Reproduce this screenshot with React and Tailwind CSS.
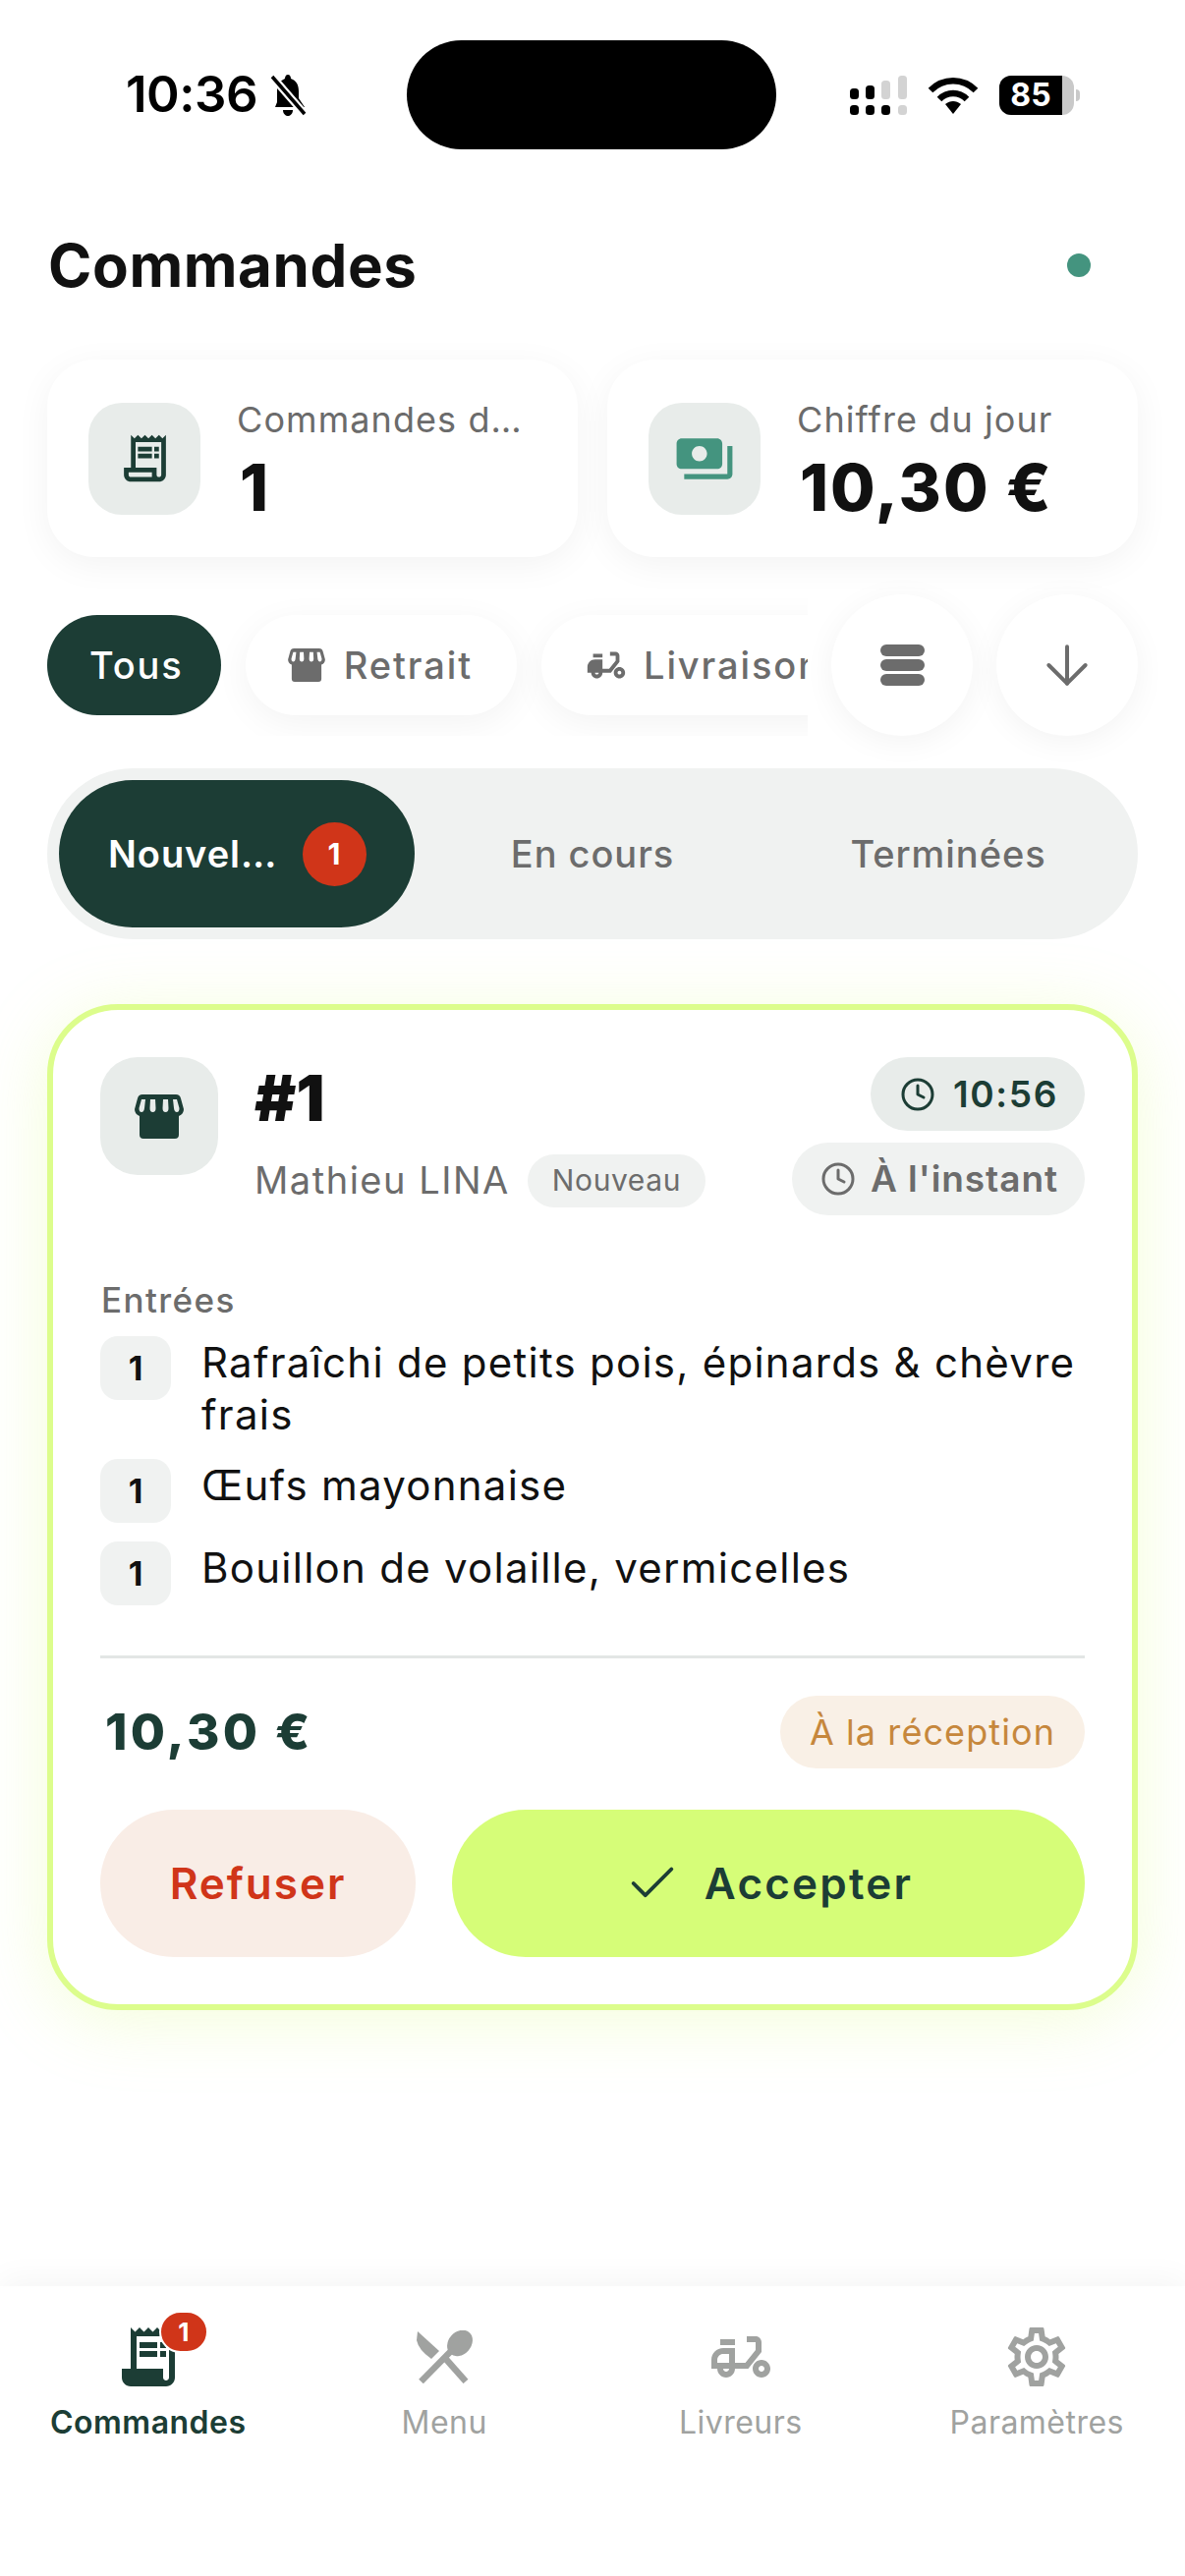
import React from "react";
import { ArrowDown, Check, Clock } from "lucide-react";
import { MdMoped, MdOutlineMoped, MdOutlineReceiptLong, MdOutlineSettings, MdPayments, MdReceiptLong } from "react-icons/md";

function StoreIcon({ className }) {
  return (
    <svg viewBox="0 0 50 45" className={className} fill="currentColor">
      <path
        fillRule="evenodd"
        d="M8 0H42Q46 0 47 4L50 15Q50 20 45 22V41Q45 45 41 45H9Q5 45 5 41V22Q0 20 0 15L3 4Q4 0 8 0ZM7 5 4.5 14Q4.5 18 7 18T10 14L11 5ZM16 5 15.5 14Q15.5 18 18.5 18T21.5 14L21 5ZM29 5 28.5 14Q28.5 18 31.5 18T34.5 14L34 5ZM39 5 40 14Q40.5 18 43 18T45.5 14L43 5Z"
      />
    </svg>
  );
}

function CutleryIcon({ className }) {
  return (
    <svg viewBox="0 0 58 54" className={className} fill="currentColor">
      <ellipse cx="45" cy="13" rx="11.5" ry="14.5" transform="rotate(42 45 13)" />
      <path d="M38 19 5.5 52" stroke="currentColor" strokeWidth="6.5" fill="none" />
      <path d="M2 1 24 21 16 29Q3 20 1 10Z" />
      <path d="M28 26 51 52" stroke="currentColor" strokeWidth="6.5" fill="none" />
    </svg>
  );
}

function SignalIcon() {
  return (
    <svg viewBox="0 0 58 40" className="w-[58px] h-[40px]">
      <rect x="0" y="13" width="9" height="11" rx="3.5" fill="#000" />
      <rect x="0" y="30" width="9" height="10" rx="3.5" fill="#000" />
      <rect x="16" y="10" width="9" height="14" rx="3.5" fill="#000" />
      <rect x="16" y="30" width="9" height="10" rx="3.5" fill="#000" />
      <rect x="32" y="5" width="9" height="19" rx="3.5" fill="#d3d3d3" />
      <rect x="32" y="30" width="9" height="10" rx="3.5" fill="#000" />
      <rect x="49" y="0" width="9" height="24" rx="3.5" fill="#d3d3d3" />
      <rect x="49" y="30" width="9" height="10" rx="3.5" fill="#d3d3d3" />
    </svg>
  );
}

function WifiIcon() {
  return (
    <svg viewBox="0 0 52 38" className="w-[52px] h-[38px]" fill="none" stroke="#000" strokeWidth="6.5">
      <path d="M3 14C16 1 36 1 49 14" />
      <path d="M12 23C20 15 32 15 40 23" />
      <path d="M18 28 26 38 34 28C29 24 23 24 18 28Z" fill="#000" stroke="none" />
    </svg>
  );
}

function BellOffIcon() {
  return (
    <svg viewBox="0 0 38 42" className="w-[38px] h-[42px]" fill="#000">
      <path d="M19 0C21 0 22 2 22 4 28 6 30 11 30 17V24L36 33H6L8 28V16C8 11 11 6 16 4 16 2 17 0 19 0Z" />
      <path d="M14 36H24C24 40 21 42 19 42S14 40 14 36Z" />
      <path d="M3 2 36 40" stroke="#fff" strokeWidth="8" />
      <path d="M3 2 36 40" stroke="#000" strokeWidth="3.5" />
    </svg>
  );
}

function StatCard({ icon, label, value }) {
  return (
    <div className="flex-1 min-w-0 h-[201px] bg-white rounded-[48px] shadow-[0_8px_36px_rgba(0,0,0,0.05)] flex items-center gap-[37px] pl-[42px] pr-[40px]">
      <div className="w-[114px] h-[114px] shrink-0 rounded-[34px] bg-[#e8ecea] flex items-center justify-center">{icon}</div>
      <div className="min-w-0">
        <p className="text-[36px] leading-[44px] text-[#6b6b6b] tracking-[0.03em] truncate mt-[6px]">{label}</p>
        <p className="text-[66px] leading-[76px] font-extrabold text-[#111] tracking-[0.03em] mt-[9px] pl-[3px]">{value}</p>
      </div>
    </div>
  );
}

function Chip({ active, icon, children }) {
  return (
    <div
      className={
        "h-[102px] shrink-0 rounded-full flex items-center gap-[19px] pl-[43px] text-[38px] font-medium tracking-[0.05em] " +
        (active ? "pr-[38px] bg-[#1c3d35] text-white" : "pr-[45px] bg-white text-[#6c6c6c] shadow-[0_8px_36px_rgba(0,0,0,0.05)]")
      }
    >
      {icon}
      {children}
    </div>
  );
}

function OrderItem({ children }) {
  return (
    <div className="flex items-start gap-[31px]">
      <div className="w-[72px] h-[65px] shrink-0 rounded-[18px] bg-[#f0f2f1] flex items-center justify-center text-[34px] font-bold text-[#111]">1</div>
      <p className="text-[42px] leading-[53px] text-[#111] tracking-[0.03em]">{children}</p>
    </div>
  );
}

function TabItem({ active, icon, label, badge }) {
  return (
    <div className={"flex-1 flex flex-col items-center " + (active ? "text-[#1c3d35]" : "text-[#a0a2a0]")}>
      <div className="relative w-[72px] h-[72px] flex items-center justify-center">
        {icon}
        {badge && (
          <span className="absolute -top-[11px] left-[47px] w-[50px] h-[43px] rounded-full bg-[#d03519] border-[2px] border-white flex items-center justify-center text-[26px] font-bold text-white">
            {badge}
          </span>
        )}
      </div>
      <span className={"text-[32px] leading-[40px] mt-[11px] tracking-[0.015em] " + (active ? "font-semibold" : "")}>{label}</span>
    </div>
  );
}

export default function App() {
  return (
    <div className="min-h-[2622px] w-[1206px] bg-white flex flex-col font-[Inter,sans-serif] overflow-hidden">
      {/* status bar */}
      <div className="h-[152px] pt-[41px] pl-[128px] flex items-start">
        <div className="flex items-center gap-[12px] h-[111px] w-[286px]">
          <span className="text-[51px] font-semibold text-black tracking-[-0.01em]">10:36</span>
          <BellOffIcon />
        </div>
        <div className="w-[376px] h-[111px] rounded-[56px] bg-black shrink-0" />
        <div className="flex items-center gap-[21px] h-[111px] pl-[75px]">
          <SignalIcon />
          <WifiIcon />
          <div className="flex items-center">
            <div className="relative w-[76px] h-[40px] rounded-[12px] bg-[#c9c9c9] overflow-hidden">
              <div className="w-[64px] h-full bg-black flex items-center justify-center text-[32px] font-bold text-white leading-none">85</div>
            </div>
            <div className="w-[4px] h-[12px] ml-[2px] rounded-r-full bg-[#c9c9c9]" />
          </div>
        </div>
      </div>

      {/* header */}
      <div className="h-[214px] pl-[49px] pr-[48px] pt-[83px] flex items-start justify-between">
        <h1 className="text-[60px] leading-[70px] font-bold text-[#111] tracking-[0.01em]">Commandes</h1>
        <div className="w-[24px] h-[24px] rounded-full bg-[#44947f] mt-[23px] mr-[48px]" />
      </div>

      {/* stats */}
      <div className="flex gap-[30px] px-[48px]">
        <StatCard icon={<MdOutlineReceiptLong className="w-[57px] h-[57px] text-[#1c3d35]" />} label="Commandes du jour" value="1" />
        <StatCard icon={<MdPayments className="w-[62px] h-[62px] text-[#44947f]" />} label="Chiffre du jour" value="10,30 €" />
      </div>

      {/* filters */}
      <div className="flex items-center gap-[24px] pr-[48px] mt-[38px]">
        <div className="flex-1 min-w-0 overflow-hidden flex gap-[25px] pl-[48px] py-[21px]">
          <Chip active>Tous</Chip>
          <Chip icon={<StoreIcon className="w-[38px] h-[34px]" />}>Retrait</Chip>
          <Chip icon={<MdMoped className="w-[46px] h-[46px] -mr-[4px]" />}>Livraison</Chip>
        </div>
        <div className="w-[144px] h-[144px] shrink-0 rounded-full bg-white shadow-[0_6px_32px_rgba(0,0,0,0.05)] flex flex-col items-center justify-center gap-[3px]">
          <span className="w-[45px] h-[12px] rounded-full bg-[#6c6c6c]" />
          <span className="w-[45px] h-[12px] rounded-full bg-[#6c6c6c]" />
          <span className="w-[45px] h-[12px] rounded-full bg-[#6c6c6c]" />
        </div>
        <div className="w-[144px] h-[144px] shrink-0 rounded-full bg-white shadow-[0_6px_32px_rgba(0,0,0,0.05)] flex items-center justify-center">
          <ArrowDown className="w-[64px] h-[64px] text-[#6c6c6c]" strokeWidth={1.5} />
        </div>
      </div>

      {/* status tabs */}
      <div className="mx-[48px] mt-[33px] h-[174px] rounded-full bg-[#f0f2f1] p-[12px] grid grid-cols-3 text-[38px] font-medium tracking-[0.025em] text-[#6c6c6c]">
        <div className="min-w-0 rounded-full bg-[#1c3d35] text-white font-semibold flex items-center gap-[26px] pl-[50px] pr-[48px]">
          <span className="truncate w-[172px]">Nouvelles</span>
          <span className="w-[65px] h-[65px] shrink-0 rounded-full bg-[#d03519] flex items-center justify-center text-[30px] font-bold">1</span>
        </div>
        <div className="flex items-center justify-center">En cours</div>
        <div className="flex items-center justify-center">Terminées</div>
      </div>

      {/* order card */}
      <div className="mx-[48px] mt-[66px] rounded-[72px] border-[6px] border-[#dcfd8c] bg-white shadow-[0_10px_70px_rgba(214,253,120,0.28)] px-[48px] pt-[48px] pb-[48px]">
        <div className="flex items-start justify-between">
          <div className="flex gap-[37px]">
            <div className="w-[120px] h-[120px] rounded-[38px] bg-[#e8ecea] flex items-center justify-center text-[#1c3d35]">
              <StoreIcon className="w-[50px] h-[45px]" />
            </div>
            <div>
              <p className="text-[64px] leading-[72px] font-black text-[#111] mt-[6px]">#1</p>
              <div className="flex items-center gap-[18px] mt-[19px]">
                <span className="text-[38px] text-[#6c6c6c] tracking-[0.04em]">Mathieu LINA</span>
                <span className="h-[54px] px-[25px] rounded-full bg-[#f0f2f1] flex items-center text-[30px] text-[#6c6c6c] tracking-[0.02em]">Nouveau</span>
              </div>
            </div>
          </div>
          <div className="flex flex-col items-end gap-[12px]">
            <div className="h-[75px] pl-[30px] pr-[27px] rounded-full bg-[#e8ecea] flex items-center gap-[18px] text-[37px] font-semibold text-[#1c3d35] tracking-[0.045em]">
              <Clock className="w-[36px] h-[36px]" strokeWidth={2} />
              10:56
            </div>
            <div className="h-[74px] pl-[29px] pr-[27px] rounded-full bg-[#f0f2f1] flex items-center gap-[15px] text-[37px] font-semibold text-[#6c6c6c] tracking-[0.025em]">
              <Clock className="w-[36px] h-[36px]" strokeWidth={2} />
              À l'instant
            </div>
          </div>
        </div>

        <p className="text-[35px] leading-[40px] font-medium text-[#6c6c6c] tracking-[0.04em] mt-[66px] pl-[1px]">Entrées</p>
        <div className="flex flex-col gap-[19px] mt-[17px]">
          <OrderItem>Rafraîchi de petits pois, épinards &amp; chèvre frais</OrderItem>
          <OrderItem>Œufs mayonnaise</OrderItem>
          <OrderItem>Bouillon de volaille, vermicelles</OrderItem>
        </div>

        <div className="h-[3px] bg-[#e3e6e5] mt-[51px]" />

        <div className="flex items-center justify-between mt-[37px]">
          <span className="text-[51px] font-extrabold text-[#1c3d35] tracking-[0.065em] pl-[5px]">10,30 €</span>
          <span className="h-[74px] px-[30px] rounded-full bg-[#f9f0e6] flex items-center text-[36px] text-[#c6873c] tracking-[0.03em]">À la réception</span>
        </div>

        <div className="flex gap-[37px] mt-[40px]">
          <button className="w-[321px] h-[150px] rounded-full bg-[#f9ede6] text-[44px] font-semibold text-[#d03519] tracking-[0.045em]">Refuser</button>
          <button className="flex-1 h-[150px] rounded-full bg-[#d6fd78] flex items-center justify-center gap-[24px] text-[44px] font-semibold text-[#1c3d35] tracking-[0.05em]">
            <Check className="w-[58px] h-[58px]" strokeWidth={1.6} />
            Accepter
          </button>
        </div>
      </div>

      {/* tab bar */}
      <div className="mt-auto h-[295px] bg-white shadow-[0_-8px_30px_rgba(0,0,0,0.04)] flex pt-[36px] px-0">
        <TabItem active icon={<MdReceiptLong className="w-[72px] h-[72px]" />} label="Commandes" badge="1" />
        <TabItem icon={<CutleryIcon className="w-[58px] h-[54px]" />} label="Menu" />
        <TabItem icon={<MdOutlineMoped className="w-[72px] h-[72px]" />} label="Livreurs" />
        <TabItem icon={<MdOutlineSettings className="w-[72px] h-[72px]" />} label="Paramètres" />
      </div>
    </div>
  );
}
